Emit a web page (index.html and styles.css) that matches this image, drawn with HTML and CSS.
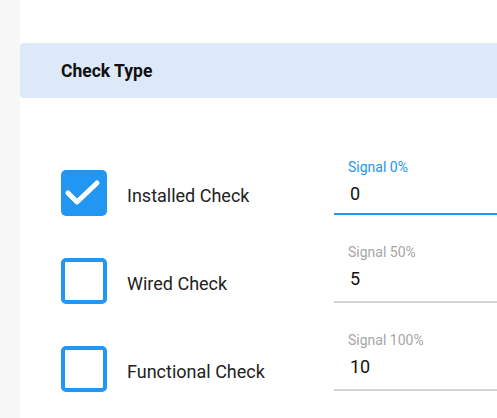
FILE: index.html
```html
<!DOCTYPE html>
<html lang="en">
<head>
    <meta charset="UTF-8">
    <meta name="viewport" content="width=device-width, initial-scale=1.0">
    <title>Check Type</title>
    <link rel="stylesheet" href="styles.css">
</head>
<body>

<div class="panel">
    <div class="section-header">Check Type</div>

    <div class="check-list">
        <div class="check-row">
            <label class="check-item">
                <span class="checkbox checked">
                    <svg viewBox="0 0 46 46" width="46" height="46">
                        <path d="M7 23 L16 32 L36 13" fill="none" stroke="#fff" stroke-width="5" stroke-linecap="round" stroke-linejoin="round"/>
                    </svg>
                </span>
                <span class="check-label">Installed Check</span>
            </label>
            <div class="field focused">
                <div class="field-label">Signal 0%</div>
                <div class="field-value">0</div>
            </div>
        </div>

        <div class="check-row">
            <label class="check-item">
                <span class="checkbox"></span>
                <span class="check-label">Wired Check</span>
            </label>
            <div class="field">
                <div class="field-label">Signal 50%</div>
                <div class="field-value">5</div>
            </div>
        </div>

        <div class="check-row">
            <label class="check-item">
                <span class="checkbox"></span>
                <span class="check-label">Functional Check</span>
            </label>
            <div class="field">
                <div class="field-label">Signal 100%</div>
                <div class="field-value">10</div>
            </div>
        </div>
    </div>
</div>

</body>
</html>
```

FILE: styles.css
```css
body {
    font-family: Roboto, 'Liberation Sans', sans-serif;
    margin: 0;
    padding: 0;
    background-color: #f7f7f7;
    color: #212121;
    overflow: hidden;
}

.panel {
    margin-left: 20px;
    background-color: #fff;
    min-height: 418px;
    padding-top: 43px;
    box-sizing: border-box;
}

.section-header {
    height: 55px;
    display: flex;
    align-items: center;
    padding-left: 41px;
    background-color: #dde9f8;
    border-radius: 4px 0 0 4px;
    font-size: 17.5px;
    font-weight: bold;
    color: #111;
}

.check-list {
    display: flex;
    flex-direction: column;
    gap: 32px;
    padding-top: 61px;
    padding-left: 41px;
}

.check-row {
    display: flex;
    align-items: flex-end;
    height: 56px;
}

.check-item {
    display: flex;
    align-items: center;
    width: 273px;
    margin-bottom: -1px;
}

.checkbox {
    width: 46px;
    height: 46px;
    box-sizing: border-box;
    border: 4px solid #2196f3;
    border-radius: 5px;
    margin-right: 20px;
    flex-shrink: 0;
}

.checkbox.checked {
    border: none;
    background-color: #2196f3;
}

.checkbox svg {
    display: block;
}

.check-label {
    font-size: 18px;
    padding-top: 4px;
    color: #222;
}

.field {
    flex: 1;
    padding-left: 14px;
    border-bottom: 2px solid #d4d4d4;
    height: 56px;
    box-sizing: border-box;
}

.field.focused {
    border-bottom-color: #2196f3;
}

.field-label {
    font-size: 14px;
    line-height: 16px;
    margin-top: -3px;
    color: #a6a6a6;
}

.focused .field-label {
    margin-top: 0;
    color: #2196f3;
}

.field-value {
    font-size: 18px;
    line-height: 24px;
    margin-top: 7px;
    padding-left: 2px;
    color: #111;
}
```
